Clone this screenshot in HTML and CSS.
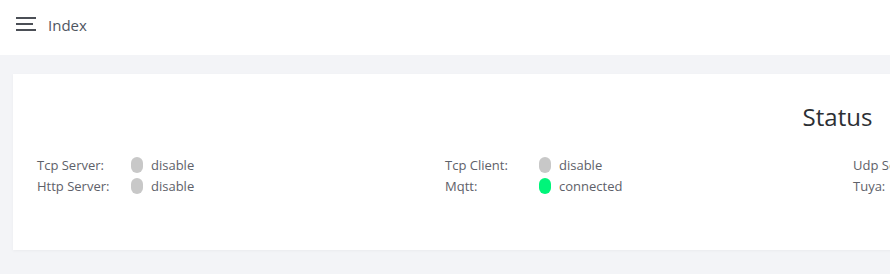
FILE: index.html
```html
<!DOCTYPE html>
<html lang="en">
<head>
  <meta charset="UTF-8" />
  <meta name="viewport" content="width=device-width, initial-scale=1.0"/>
  <title>Index</title>
  <link rel="stylesheet" href="styles.css">
</head>
<body>

  <div class="header">
    <svg class="menu-icon" width="20" height="14" viewBox="0 0 20 14">
      <rect x="0" y="0" width="20" height="2" fill="#4b4f56"/>
      <rect x="0" y="6" width="17" height="2" fill="#4b4f56"/>
      <rect x="0" y="12" width="20" height="2" fill="#4b4f56"/>
    </svg>
    <span class="crumb">Index</span>
  </div>

  <div class="main">
    <div class="card">
      <div class="title">Status</div>
      <div class="grid">
        <div class="col">
          <div class="row"><span class="label">Tcp Server:</span><span class="dot"></span><span class="value">disable</span></div>
          <div class="row"><span class="label">Http Server:</span><span class="dot"></span><span class="value">disable</span></div>
        </div>
        <div class="col">
          <div class="row"><span class="label">Tcp Client:</span><span class="dot"></span><span class="value">disable</span></div>
          <div class="row"><span class="label">Mqtt:</span><span class="dot on"></span><span class="value">connected</span></div>
        </div>
        <div class="col">
          <div class="row"><span class="label">Udp Server:</span><span class="dot"></span><span class="value">disable</span></div>
          <div class="row"><span class="label">Tuya:</span><span class="dot"></span><span class="value">disable</span></div>
        </div>
        <div class="col"></div>
      </div>
    </div>
  </div>

</body>
</html>
```

FILE: styles.css
```css
body {
  margin: 0;
  background: #f3f4f7;
  font-family: "Open Sans", "Noto Sans", sans-serif;
  color: #5e6169;
  overflow: hidden;
}

.header {
  height: 55px;
  background: #fff;
  display: flex;
  align-items: center;
  padding-left: 16px;
  box-sizing: border-box;
}

.menu-icon {
  display: block;
  margin-right: 12px;
  margin-top: -8px;
}

.crumb {
  font-size: 15px;
  color: #4f5661;
  margin-top: -6px;
}

.main {
  padding: 19px 13px;
  width: 1649px;
}

.card {
  width: 1649px;
  height: 176px;
  box-sizing: border-box;
  background: #fff;
  padding: 26px 24px 20px;
  box-shadow: 0 1px 3px rgba(0, 0, 0, 0.04);
}

.title {
  text-align: center;
  font-size: 24px;
  color: #2c2f34;
  line-height: 33px;
}

.grid {
  display: grid;
  grid-template-columns: repeat(4, 408px);
  margin-top: 21px;
}

.row {
  display: flex;
  align-items: center;
  height: 21px;
  font-size: 13px;
}

.label {
  width: 94px;
}

.dot {
  width: 12px;
  height: 16px;
  border-radius: 6px;
  background: #c8c8c8;
  margin-right: 8px;
}

.dot.on {
  background: #00f57a;
}
```
